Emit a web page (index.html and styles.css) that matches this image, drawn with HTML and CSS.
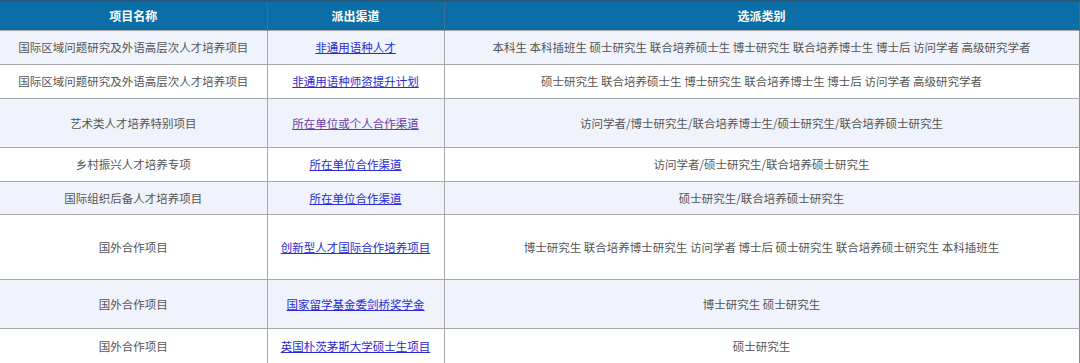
FILE: index.html
```html
<!DOCTYPE html>
<html lang="zh">
<head>
<meta charset="utf-8">
<link rel="stylesheet" href="styles.css">
</head>
<body>
<table class="plan">
  <colgroup>
    <col class="c1"><col class="c2"><col class="c3">
  </colgroup>
  <thead>
    <tr class="h-head"><th>项目名称</th><th>派出渠道</th><th>选派类别</th></tr>
  </thead>
  <tbody>
    <tr class="alt h34"><td>国际区域问题研究及外语高层次人才培养项目</td><td><a href="#">非通用语种人才</a></td><td>本科生 本科插班生 硕士研究生 联合培养硕士生 博士研究生 联合培养博士生 博士后 访问学者 高级研究学者</td></tr>
    <tr class="h34"><td>国际区域问题研究及外语高层次人才培养项目</td><td><a href="#">非通用语种师资提升计划</a></td><td>硕士研究生 联合培养硕士生 博士研究生 联合培养博士生 博士后 访问学者 高级研究学者</td></tr>
    <tr class="alt h49"><td>艺术类人才培养特别项目</td><td><a href="#" class="visited">所在单位或个人合作渠道</a></td><td>访问学者/博士研究生/联合培养博士生/硕士研究生/联合培养硕士研究生</td></tr>
    <tr class="h34"><td>乡村振兴人才培养专项</td><td><a href="#">所在单位合作渠道</a></td><td>访问学者/硕士研究生/联合培养硕士研究生</td></tr>
    <tr class="alt h33"><td>国际组织后备人才培养项目</td><td><a href="#">所在单位合作渠道</a></td><td>硕士研究生/联合培养硕士研究生</td></tr>
    <tr class="h65"><td>国外合作项目</td><td><a href="#">创新型人才国际合作培养项目</a></td><td>博士研究生 联合培养博士研究生 访问学者 博士后 硕士研究生 联合培养硕士研究生 本科插班生</td></tr>
    <tr class="alt h49"><td>国外合作项目</td><td><a href="#">国家留学基金委剑桥奖学金</a></td><td>博士研究生 硕士研究生</td></tr>
    <tr class="h35"><td>国外合作项目</td><td><a href="#">英国朴茨茅斯大学硕士生项目</a></td><td>硕士研究生</td></tr>
  </tbody>
</table>
</body>
</html>
```
FILE: styles.css
```css
html, body {
  margin: 0;
  padding: 0;
  background: #ffffff;
}
.plan {
  width: 1079px;
  border-collapse: collapse;
  table-layout: fixed;
  font-family: "Noto Sans CJK SC", "Microsoft YaHei", sans-serif;
  font-size: 11.5px;
  color: #555555;
}
.c1 { width: 267px; }
.c2 { width: 177px; }
.c3 { width: 635px; }
.plan th {
  background: #0b6ea6;
  color: #ffffff;
  font-weight: bold;
  font-size: 12px;
  border-top: 2px solid #28597a;
  border-left: 1px solid #3d6f8f;
  border-right: 1px solid #3d6f8f;
  padding: 0;
  text-align: center;
}
.plan th:first-child { border-left: none; }
.plan td {
  border: 1px solid #a8a8a8;
  padding: 0;
  text-align: center;
  vertical-align: middle;
  line-height: 16px;
}
.plan td:first-child { border-left: none; }
.plan td:last-child { border-right: 1px solid #8c8c8c; }
.alt td { background: #f0f3fb; }
.plan a {
  color: #2a2bd3;
  text-decoration: underline;
}
.plan a.visited { color: #6c3aa6; }
.h-head { height: 29px; }
.h33 { height: 33px; }
.h34 { height: 34px; }
.h35 { height: 35px; }
.h49 { height: 49px; }
.h65 { height: 65px; }
```
